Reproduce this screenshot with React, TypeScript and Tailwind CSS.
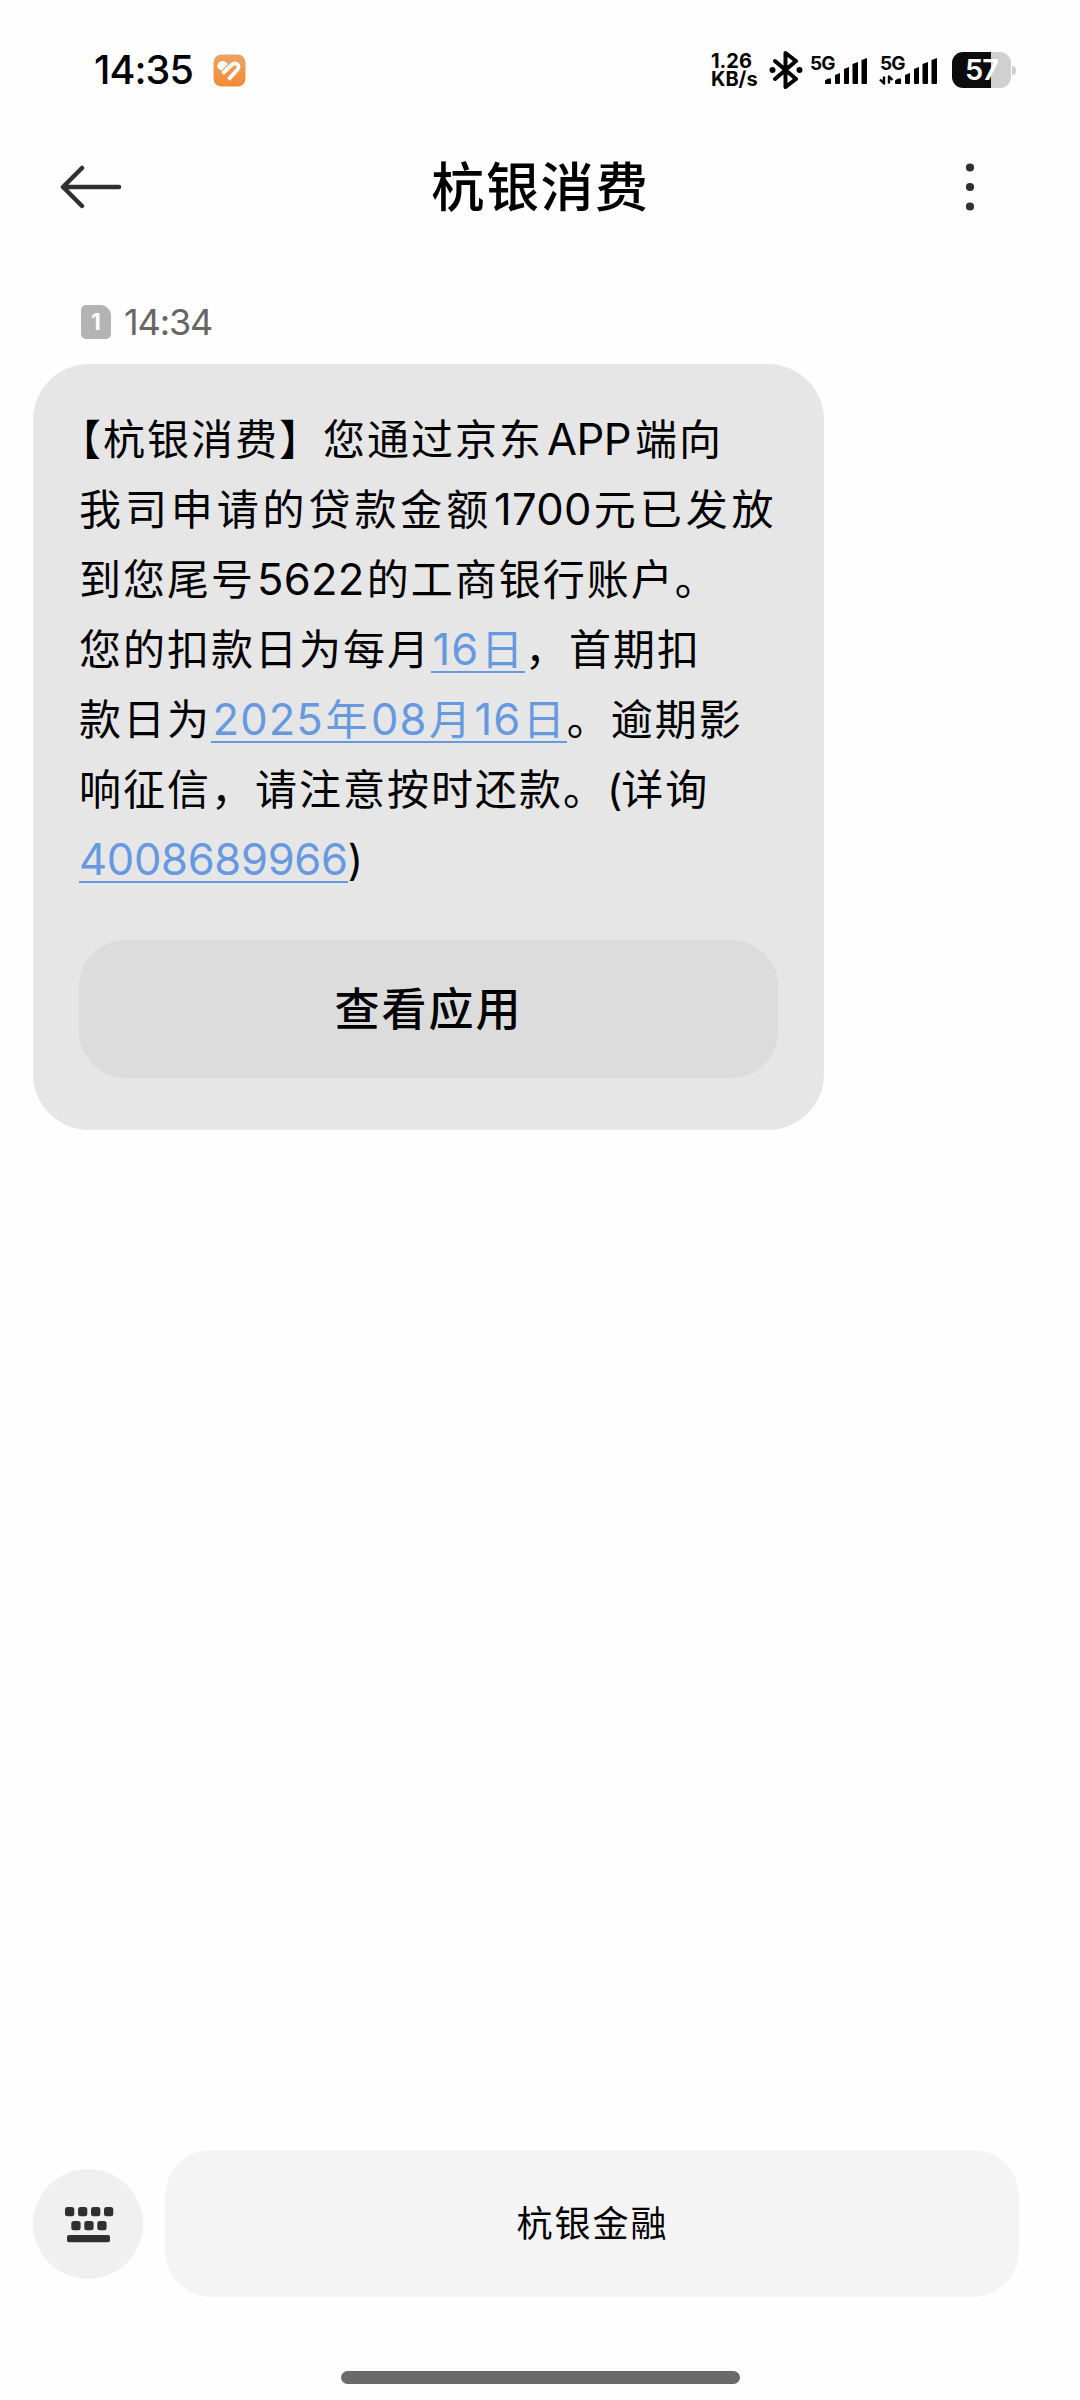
import type { ReactNode } from "react";

function Signal({ withData = false }: { withData?: boolean }) {
  return (
    <svg width="61" height="36" viewBox="0 0 61 36" className="shrink-0 overflow-visible">
      <text x="0" y="17.5" fontSize="19" fontWeight="700" fontFamily="Inter, sans-serif" textLength="25.5">
        5G
      </text>
      {withData && (
        <path
          d="M4 24.500v7l-4-4M9 31.500v-7l3.500 3.500"
          fill="none"
          stroke="#000"
          strokeWidth="2.4"
          strokeLinejoin="round"
        />
      )}
      <path d="M15 31V28.500l3-2h3v5.500h-5a1 1 0 0 1-1-1z" />
      <path d="M25 31V23l5-2v10a1 1 0 0 1-1 1h-3a1 1 0 0 1-1-1z" />
      <path d="M34 31V17l5-2v16a1 1 0 0 1-1 1h-3a1 1 0 0 1-1-1z" />
      <path d="M42.500 31V12l5.500-2v21a1 1 0 0 1-1 1h-3.500a1 1 0 0 1-1-1z" />
      <path d="M51.500 31V8l5.500-2v25a1 1 0 0 1-1 1h-3.500a1 1 0 0 1-1-1z" />
    </svg>
  );
}

function StatusBar() {
  return (
    <div className="flex h-[140px] items-center justify-between pl-[94px] pr-[64px]">
      <div className="flex items-center">
        <span className="w-[119px] text-[39.5px] font-medium leading-[40px] tracking-[-0.900px]">14:35</span>
        <svg width="33" height="33" viewBox="0 0 33 33">
          <defs>
            <linearGradient id="health" x1="0" y1="0" x2="0" y2="1">
              <stop offset="0" stopColor="#e9a566" />
              <stop offset="1" stopColor="#f28a33" />
            </linearGradient>
          </defs>
          <rect x="0.500" y="0.500" width="32" height="32" rx="8" fill="url(#health)" />
          {/* heart made of a left lobe and a hairpin band */}
          <path d="M5 14.500C2.500 10 8 5 12.500 8L15 10L8.500 16.500z" fill="#fff" />
          <path
            d="M9.500 19.500L18.500 11C22.500 7.500 28 11 24.500 15.500L15.500 25.500"
            fill="none"
            stroke="#fff"
            strokeWidth="3.800"
          />
        </svg>
      </div>
      <div className="flex items-center">
        <div className="w-[58px] text-[20px] font-bold leading-[18px]">
          <div>1.26</div>
          <div>KB/s</div>
        </div>
        <svg width="34" height="38" viewBox="0 0 34 38" className="mr-[7px]">
          <path
            d="M6 10l21 18-10.500 8V2L27 10 6 28"
            fill="none"
            stroke="#000"
            strokeWidth="4"
            strokeLinejoin="round"
            strokeLinecap="round"
          />
          <circle cx="3.500" cy="19" r="3" />
          <circle cx="30.500" cy="19" r="3" />
        </svg>
        <div className="mr-[9px]">
          <Signal />
        </div>
        <div className="mr-[11px]">
          <Signal withData />
        </div>
        <div className="flex h-9 w-[59px] items-center justify-center rounded-[11px] bg-[linear-gradient(90deg,#0c0c0c_66%,#d0d0d0_66%)]">
          <span className="text-[29px] font-semibold leading-9 tracking-[-1px] text-white">57</span>
        </div>
        <div className="ml-px h-[9px] w-[4px] rounded-r-full bg-[#d0d0d0]" />
      </div>
    </div>
  );
}

function TitleBar() {
  return (
    <header className="flex h-[94px] items-center justify-between pl-[60px] pr-[105px]">
      <svg width="62" height="44" viewBox="0 0 62 44" fill="none" stroke="#303030" strokeWidth="4.500" strokeLinecap="round" strokeLinejoin="round">
        <path d="M22 3L3 22l19 19M3 22h56" />
      </svg>
      <h1 className="pt-[2px] text-[53px] font-medium leading-[70px] tracking-[1.600px]">杭银消费</h1>
      <svg width="10" height="48" viewBox="0 0 10 48" fill="#303030" className="ml-[6px]">
        <circle cx="5" cy="4.500" r="4.100" />
        <circle cx="5" cy="24" r="4.100" />
        <circle cx="5" cy="43.500" r="4.100" />
      </svg>
    </header>
  );
}

function Line({ children }: { children: ReactNode }) {
  return <div className="h-[70px] whitespace-nowrap">{children}</div>;
}

// digits sit slightly larger than the hanzi around them
function Num({ children }: { children: ReactNode }) {
  return <span className="px-[2px] text-[43.5px] leading-[60px] tracking-[0.300px]">{children}</span>;
}

function DateNum({ children }: { children: ReactNode }) {
  return <span className="px-[1.5px] text-[43.5px] leading-[60px] tracking-[1.100px]">{children}</span>;
}

// the rule is a border so that it runs on through the padding of the numbers
function Link({ children }: { children: ReactNode }) {
  return (
    <a href="#" className="inline-block h-[58px] border-b-2 border-[#6699e0] align-top text-[#6699e0]">
      {children}
    </a>
  );
}

function Message() {
  return (
    <section className="ml-[33px] h-[766px] w-[791px] rounded-[56px] bg-[#e6e6e6] px-[46px] pt-[41px]">
      <div className="text-[42px] leading-[70px] tracking-[2px]">
        <Line>
          <span className="-ml-[20px]">【</span>杭银消费】您通过京东
          <span className="mx-[4px] text-[43.5px] leading-[60px] tracking-[-0.5px]">APP</span>端向
        </Line>
        <Line>
          <span className="tracking-[3.900px]">我司申请的贷款金额</span>
          <Num>1700</Num>
          <span className="tracking-[3.900px]">元已发放</span>
        </Line>
        <Line>
          到您尾号<Num>5622</Num>的工商银行账户。
        </Line>
        <Line>
          您的扣款日为每月
          <Link>
            <DateNum>16</DateNum>日
          </Link>
          ，首期扣
        </Line>
        <Line>
          款日为
          <Link>
            <DateNum>2025</DateNum>年<DateNum>08</DateNum>月<DateNum>16</DateNum>日
          </Link>
          。逾期影
        </Line>
        <Line>
          响征信，请注意按时还款。<span className="tracking-[-1px]">(</span>详询
        </Line>
        <Line>
          <Link>
            <span className="text-[43.5px] leading-[60px] tracking-[-0.300px]">4008689966</span>
          </Link>
          )
        </Line>
      </div>
      <button className="mt-[45px] h-[138px] w-[699px] rounded-[46px] bg-[#dcdcdc] pt-[2px] text-[45px] font-medium tracking-[2px]">
        查看应用
      </button>
    </section>
  );
}

function KeyboardIcon() {
  return (
    <svg width="50" height="36" viewBox="0 0 50 36" fill="#303030" className="mt-[3px] ml-px">
      {[1, 14, 27, 40].map((x) => (
        <rect key={x} x={x} y="0" width="9.300" height="9.300" rx="2.500" />
      ))}
      {[7.3, 20.3, 33.3].map((x) => (
        <rect key={x} x={x} y="14" width="9.300" height="9.300" rx="2.500" />
      ))}
      <rect x="3" y="28" width="43" height="7.300" rx="2" />
    </svg>
  );
}

export default function App() {
  return (
    <div className="flex h-[2400px] w-[1080px] flex-col bg-[#fefefe] font-['Inter','Noto_Sans_CJK_SC',sans-serif] text-black">
      <StatusBar />
      <TitleBar />
      <div className="mt-[66px] flex h-[44px] items-center pl-[81px] text-[36px] leading-[44px] text-[#666]">
        <div className="mr-[13px] flex h-[34px] w-[30px] items-center justify-center rounded-[5px] rounded-tr-[11px] bg-[#b3b3b3] text-[23px] font-bold leading-[34px] text-white">
          1
        </div>
        <span className="tracking-[-1.100px]">14:34</span>
      </div>
      <div className="mt-[20px]">
        <Message />
      </div>
      <footer className="mt-auto">
        <div className="flex h-[147px] items-center pl-[33px]">
          <button className="flex size-[110px] items-center justify-center rounded-full bg-[#f0f0f0]">
            <KeyboardIcon />
          </button>
          <button className="ml-[22px] h-[147px] w-[854px] rounded-[46px] bg-[#f4f4f4] pt-px pl-px text-[36px] tracking-[2px]">
            杭银金融
          </button>
        </div>
        <div className="mx-auto mt-[74px] mb-[16px] h-[13px] w-[399px] rounded-full bg-[#6a6a6a]" />
      </footer>
    </div>
  );
}
